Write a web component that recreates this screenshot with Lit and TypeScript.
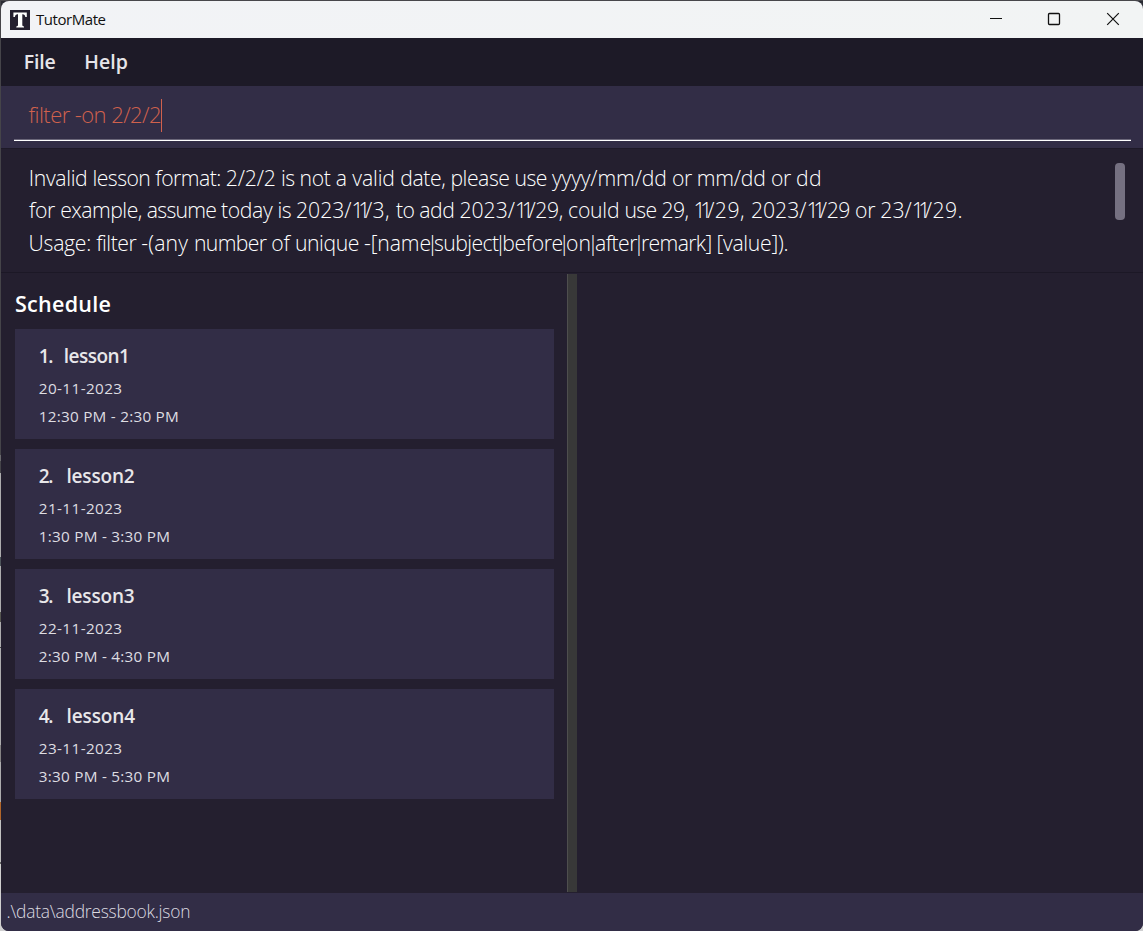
import { LitElement, html, css, svg } from "lit";
import { customElement, property } from "lit/decorators.js";

/** A run of text whose tracking is adjusted so that it occupies a given width. */
@customElement("fit-text")
export class FitText extends LitElement {
  static styles = css`
    :host { display: inline-flex; justify-content: center; white-space: pre; flex: none; }
    span { flex: none; white-space: pre; }
  `;
  @property() text = "";
  @property({ type: Number }) width = 0;
  render() {
    return html`<span>${this.text}</span>`;
  }
  updated() {
    this.style.width = `${this.width}px`;
    const span = this.renderRoot.querySelector("span")!;
    if (this.text.length < 2) return;
    span.style.letterSpacing = "0px";
    const natural = span.getBoundingClientRect().width;
    span.style.letterSpacing = `${(this.width - natural) / this.text.length}px`;
  }
}

type Run = [string, number];
interface Line { end: number; runs: Run[] }

/* Each run carries the x at which it begins; a line ends at its own x. */
const RESULT: Line[] = [
  { end: 822, runs: [
    ["Invalid ", 28.8], ["lesson ", 92.5], ["format: ", 155.3], ["2/2/2 ", 225.8], ["is ", 281],
    ["not ", 299.5], ["a ", 335.7], ["valid ", 352.3], ["date, ", 400.3], ["please ", 450.5],
    ["use ", 514.6], ["yyyy/mm/dd ", 552], ["or ", 672.2], ["mm/dd ", 696.9], ["or ", 771], ["dd", 796],
  ] },
  { end: 963, runs: [
    ["for ", 29], ["example, ", 60.2], ["assume ", 146.8], ["today ", 221], ["is ", 277.5],
    ["2023/", 296], ["11", 351.6], ["/3, ", 365], ["to ", 396], ["add ", 419.2], ["2023/", 459.5],
    ["11", 515.1], ["/29, ", 528.5], ["could ", 568.2], ["use ", 624.6], ["29, ", 661.5], ["11", 693.5],
    ["/29, ", 707.3], ["2023/", 751], ["11", 806.6], ["/29 ", 820], ["or ", 855.2], ["23/", 880.5],
    ["11", 912], ["/29.", 925],
  ] },
  { end: 788.3, runs: [
    ["Usage: ", 28.6], ["filter ", 96.2], ["-(any ", 141.2], ["number ", 194], ["of ", 271.2],
    ["unique ", 295], ["-[name", 364], ["|", 431], ["subject", 434], ["|", 498.5],
    ["before", 502.4], ["|", 562.8], ["on", 566], ["|", 591], ["after", 595], ["|", 637],
    ["remark] ", 641], ["[value]).", 716.5],
  ] },
];

const LESSONS = [
  { index: "1.", indexW: 25, name: "lesson1", nameW: 65.5, date: "20-11-2023", time: "12:30 PM - 2:30 PM", timeW: 140.2 },
  { index: "2.", indexW: 27.7, name: "lesson2", nameW: 68, date: "21-11-2023", time: "1:30 PM - 3:30 PM", timeW: 131.5 },
  { index: "3.", indexW: 27.7, name: "lesson3", nameW: 68, date: "22-11-2023", time: "2:30 PM - 4:30 PM", timeW: 131.5 },
  { index: "4.", indexW: 27.7, name: "lesson4", nameW: 68.5, date: "23-11-2023", time: "3:30 PM - 5:30 PM", timeW: 131.5 },
];

@customElement("app-root")
export class AppRoot extends LitElement {
  static styles = css`
    :host {
      display: block; width: 1143px; height: 931px; overflow: hidden; box-sizing: border-box;
      padding: 1px 0 0 1px;
      font-family: "Open Sans", "Noto Sans", sans-serif;
      background:
        linear-gradient(#48474b, #48474b) 0 0 / 100% 1px no-repeat,
        linear-gradient(to bottom, #454449 0 455px, #6a696d 455px 461px, #454449 461px 473px, #adacad 473px 557px,
          #4c5358 557px 566px, #adacad 566px 612px, #55554f 612px 622px, #adacad 622px 647px, #444 647px 648px,
          #adacad 648px 745px, #858383 745px 762px, #adacad 762px 802px, #b2662a 802px 820px, #c2c1c1 820px 862px,
          #666 862px 864px, #d0cfcf 864px) 0 0 / 1px 100% no-repeat,
        linear-gradient(#2a2b33 0 50%, #cfcfd1 50%);
    }
    .window {
      display: flex; flex-direction: column; height: 930px; border-radius: 8px; overflow: hidden;
      background: #241f2f; color: #fff;
    }
    .title {
      display: flex; align-items: center; flex: none; height: 37px; padding: 0 1px 0 9px; box-sizing: border-box;
      background: linear-gradient(90deg, #f2f3f6, #f2f4f4); color: #111; font-size: 15px;
    }
    .logo { width: 20px; height: 20px; margin-right: 6px; display: block; }
    .title fit-text { line-height: 36px; height: 37px; }
    .controls { display: flex; margin-left: auto; }
    .controls svg { display: block; width: 58.5px; height: 37px; }
    .menu {
      display: flex; flex: none; height: 48px; padding-left: 22.7px; gap: 28.8px; background: #1d1a27;
      color: #e6e5e9; font-size: 19.5px; font-weight: 600; line-height: 47px;
    }
    .command { flex: none; height: 62px; padding: 0 12px 0 13px; box-sizing: border-box; background: #322d46; }
    .field {
      display: flex; align-items: center; height: 55px; box-sizing: border-box; padding: 3px 0 0 14.5px;
      border-bottom: 1px solid #fff; box-shadow: inset 0 -1px #6b677a;
      color: #d0614d; font-size: 22px; font-weight: 300; line-height: 50px;
    }
    .field fit-text { height: 51px; }
    .caret { width: 1px; height: 33px; background: #d0614d; margin-top: 2px; }
    .result {
      display: flex; justify-content: space-between; flex: none; height: 125px; box-sizing: border-box;
      padding: 13px 18px 0 0; border-top: 1px solid #1e1a28; border-bottom: 1px solid #1c1826;
      font-size: 21.2px; font-weight: 300; line-height: 32px;
    }
    .line { display: flex; height: 32px; }
    .line:nth-child(2) { height: 33px; }
    .thumb { width: 10px; height: 57px; margin-top: 1px; border-radius: 4px; background: #757081; }
    .main { display: flex; flex: none; height: 620px; }
    .left { width: 539px; padding: 14px 13px 0 14px; }
    .heading { display: flex; height: 42px; font-size: 21.5px; font-weight: 600; line-height: 33px; }
    .list { display: grid; gap: 10px; }
    .card { height: 110px; box-sizing: border-box; padding: 11px 0 0 23.8px; background: #322d46; color: #dedde2; }
    .name { display: flex; height: 34px; font-size: 19px; font-weight: 600; line-height: 32px; color: #e8e7ea; }
    .row { display: flex; height: 28px; font-size: 15.3px; line-height: 28px; }
    .divider { width: 9px; height: 618px; margin-top: 1px; background: #383838; border-left: 1px solid #4e4e4e; }
    .status {
      flex: 1; padding-left: 5.5px; background: #322d46; color: #dcdbe1;
      font-size: 17.4px; font-weight: 300; line-height: 37px;
    }
  `;

  private line(l: Line) {
    return html`<div class="line" style="padding-left:${l.runs[0][1] - 1}px">${l.runs.map(
      ([text, x], i) => html`<fit-text .text=${text} .width=${(l.runs[i + 1]?.[1] ?? l.end) - x}></fit-text>`,
    )}</div>`;
  }

  private control(shape: unknown) {
    return html`<svg viewBox="0 0 58.5 37" fill="none" stroke="#111" stroke-width="1.1">${shape}</svg>`;
  }

  render() {
    return html`
      <div class="window">
        <div class="title">
          <svg class="logo" viewBox="0 0 20 20">
            <rect width="20" height="20" fill="#241f2f" />
            <path fill="#fff" d="M3.4 2.6H16.8V7H15.4Q15 4.3 13 4.3H12.3V15.2Q12.3 16.3 14 16.4V17.5H6.3V16.4Q8 16.3 8 15.2V4.3H7.2Q5.2 4.3 4.8 7H3.4Z" />
          </svg>
          <fit-text .text=${"TutorMate"} .width=${69.5}></fit-text>
          <div class="controls">
            ${this.control(svg`<path d="M23 17.5H35" />`)}
            ${this.control(svg`<rect x="23.5" y="12.5" width="11" height="11" rx="1" stroke-width="1.3" />`)}
            ${this.control(svg`<path d="M23.2 12.2L34.8 23.8M34.8 12.2L23.2 23.8" stroke-width="1.2" />`)}
          </div>
        </div>
        <div class="menu">
          <fit-text .text=${"File"} .width=${31.8}></fit-text>
          <fit-text .text=${"Help"} .width=${43.6}></fit-text>
        </div>
        <div class="command">
          <div class="field"><fit-text .text=${"filter -on 2/2/2"} .width=${132.5}></fit-text><i class="caret"></i></div>
        </div>
        <div class="result">
          <div>${RESULT.map((l) => this.line(l))}</div>
          <div class="thumb"></div>
        </div>
        <div class="main">
          <div class="left">
            <div class="heading"><fit-text .text=${"Schedule"} .width=${96.2}></fit-text></div>
            <div class="list">
              ${LESSONS.map((l) => html`
                <div class="card">
                  <div class="name">
                    <div style="width:${l.indexW}px"><fit-text .text=${l.index} .width=${13.2}></fit-text></div>
                    <fit-text .text=${l.name} .width=${l.nameW}></fit-text>
                  </div>
                  <div class="row"><fit-text .text=${l.date} .width=${83.7}></fit-text></div>
                  <div class="row"><fit-text .text=${l.time} .width=${l.timeW}></fit-text></div>
                </div>`)}
            </div>
          </div>
          <div class="divider"></div>
        </div>
        <div class="status"><fit-text .text=${".\\data\\addressbook.json"} .width=${183.7}></fit-text></div>
      </div>
    `;
  }
}
